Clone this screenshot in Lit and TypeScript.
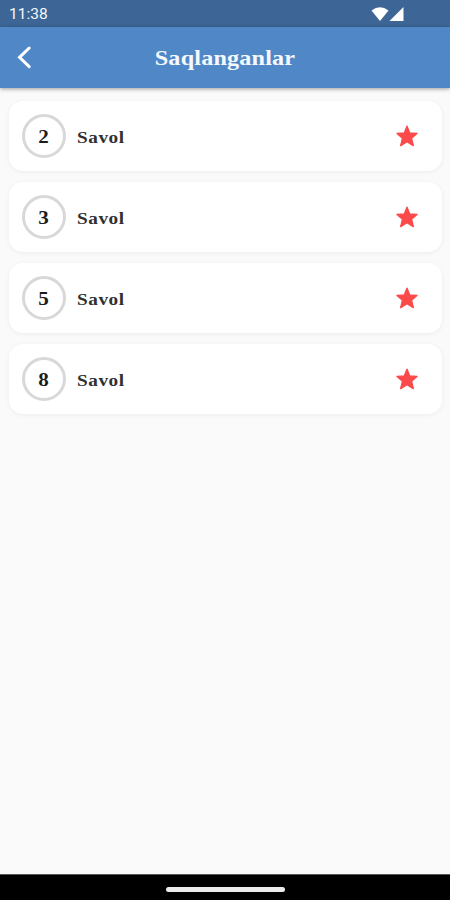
import { LitElement, html, css } from "lit";
import { customElement, property } from "lit/decorators.js";

@customElement("question-card")
class QuestionCard extends LitElement {
  @property({ type: Number }) number = 0;

  static styles = css`
    :host {
      display: flex;
      align-items: center;
      box-sizing: border-box;
      height: 70px;
      padding: 0 23px 0 13px;
      border-radius: 14px;
      background: #fff;
      box-shadow: 0 1px 5px rgba(0, 0, 0, 0.06);
      font-family: "Liberation Serif", serif;
      font-weight: 700;
      color: #1c1c1c;
    }
    .badge {
      display: flex;
      align-items: center;
      justify-content: center;
      box-sizing: border-box;
      width: 44px;
      height: 44px;
      border: 3px solid #d8d8d8;
      border-radius: 50%;
      font-size: 18.5px;
      line-height: 22px;
    }
    .digit {
      padding-top: 2px;
      transform: scaleX(1.14);
    }
    .label {
      flex: 1;
      margin-left: 11px;
      padding-top: 2px;
      font-size: 17.5px;
      line-height: 22px;
      letter-spacing: 0.5px;
      color: #303030;
      transform: scaleX(1.1);
      transform-origin: left;
    }
    .star {
      display: block;
      width: 24px;
      height: 24px;
    }
  `;

  render() {
    return html`
      <div class="badge"><span class="digit">${this.number}</span></div>
      <div class="label">Savol</div>
      <svg class="star" viewBox="0 0 24 24">
        <path
          d="M12 2.2 L14.7 8.9 L22 9.5 L16.5 14.2 L18.3 21.6 L12 17.7 L5.7 21.6 L7.5 14.2 L2 9.5 L9.3 8.9 Z"
          fill="#fc4a4b" stroke="#fc4a4b" stroke-width="1.4" stroke-linejoin="round"
        />
      </svg>
    `;
  }
}

@customElement("app-root")
class AppRoot extends LitElement {
  static styles = css`
    :host {
      display: flex;
      flex-direction: column;
      height: 900px;
      overflow: hidden;
      background: #fafafa;
    }
    .status {
      display: flex;
      align-items: center;
      justify-content: space-between;
      box-sizing: border-box;
      height: 27px;
      padding: 1px 45px 0 9px;
      background: #3d6697;
      color: #f4f7fb;
      font: 400 15.5px/26px Roboto, sans-serif;
    }
    .signals {
      display: block;
      width: 34px;
      height: 16px;
    }
    .bar {
      display: grid;
      grid-template-columns: 48px 1fr 48px;
      align-items: center;
      height: 61px;
      background: #4f87c7;
      box-shadow: 0 1px 4px rgba(0, 0, 0, 0.38);
    }
    .back {
      display: block;
      width: 48px;
      height: 48px;
    }
    .title {
      margin: 0;
      padding-top: 1px;
      text-align: center;
      font: 700 22px/28px "Liberation Serif", serif;
      letter-spacing: 0.15px;
      color: #f5f9ff;
      transform: scaleX(1.1);
    }
    .list {
      flex: 1;
      display: flex;
      flex-direction: column;
      gap: 11px;
      padding: 13px 8px 0 9px;
    }
    .nav {
      display: flex;
      justify-content: center;
      align-items: center;
      box-sizing: border-box;
      height: 26px;
      padding-top: 4px;
      background: #000;
      border-top: 1px solid #555;
    }
    .pill {
      width: 119px;
      height: 5px;
      border-radius: 3px;
      background: #ececec;
    }
  `;

  render() {
    return html`
      <div class="status">
        <span>11:38</span>
        <svg class="signals" viewBox="0 0 34 16">
          <path d="M0.5 4.5 Q9 -2 17.5 4.5 L9 15 Z" fill="#fff" />
          <path d="M32.5 1 V15 H18.5 Z" fill="#fff" />
        </svg>
      </div>
      <header class="bar">
        <svg class="back" viewBox="0 0 48 48">
          <path d="M29.2 14 L19.5 23.3 L29.2 32.6" fill="none" stroke="#fff" stroke-width="3" stroke-linecap="round" stroke-linejoin="miter" />
        </svg>
        <h1 class="title">Saqlanganlar</h1>
      </header>
      <main class="list">
        ${[2, 3, 5, 8].map((n) => html`<question-card .number=${n}></question-card>`)}
      </main>
      <div class="nav"><div class="pill"></div></div>
    `;
  }
}
